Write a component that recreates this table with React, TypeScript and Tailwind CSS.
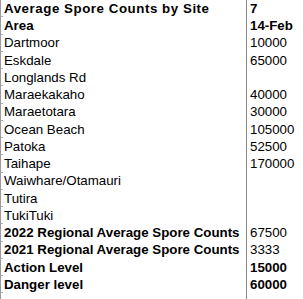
import React from 'react';

type Row = { area: string; value: string; bold?: boolean; boldValue?: boolean };

const rows: Row[] = [
  { area: 'Average Spore Counts by Site', value: '7', bold: true, boldValue: true },
  { area: 'Area', value: '14-Feb', bold: true, boldValue: true },
  { area: 'Dartmoor', value: '10000' },
  { area: 'Eskdale', value: '65000' },
  { area: 'Longlands Rd', value: '' },
  { area: 'Maraekakaho', value: '40000' },
  { area: 'Maraetotara', value: '30000' },
  { area: 'Ocean Beach', value: '105000' },
  { area: 'Patoka', value: '52500' },
  { area: 'Taihape', value: '170000' },
  { area: 'Waiwhare/Otamauri', value: '' },
  { area: 'Tutira', value: '' },
  { area: 'TukiTuki', value: '' },
  { area: '2022 Regional Average Spore Counts', value: '67500', bold: true },
  { area: '2021 Regional Average Spore Counts', value: '3333', bold: true },
  { area: 'Action Level', value: '15000', bold: true, boldValue: true },
  { area: 'Danger level', value: '60000', bold: true, boldValue: true },
];

export default function App() {
  return (
    <div
      className="w-[303px] h-[299px] overflow-hidden bg-white text-black text-[13.3px] leading-none"
      style={{ fontFamily: '"Liberation Sans", Arial, sans-serif' }}
    >
      <div className="flex flex-col border-l border-[#9b9b9b] h-full">
        {rows.map((r, i) => (
          <div key={r.area} className="relative flex h-[17.25px] items-center">
            {/* row tick on the sheet edge */}
            <div className="absolute left-0 bottom-0 w-[2px] h-px bg-[#b0b0b0]" />
            <div
              className={`w-[246px] shrink-0 h-full flex items-center pl-[3px] border-r border-[#8a8a8a] whitespace-nowrap ${r.bold ? 'font-bold' : ''} ${i === 0 ? 'tracking-[0.55px]' : ''}`}
            >
              {r.area}
            </div>
            <div className={`pl-[3px] h-full flex items-center ${r.boldValue ? 'font-bold' : ''}`}>{r.value}</div>
          </div>
        ))}
        <div className="flex flex-1">
          <div className="w-[246px] shrink-0 border-r border-[#8a8a8a]" />
        </div>
      </div>
    </div>
  );
}
